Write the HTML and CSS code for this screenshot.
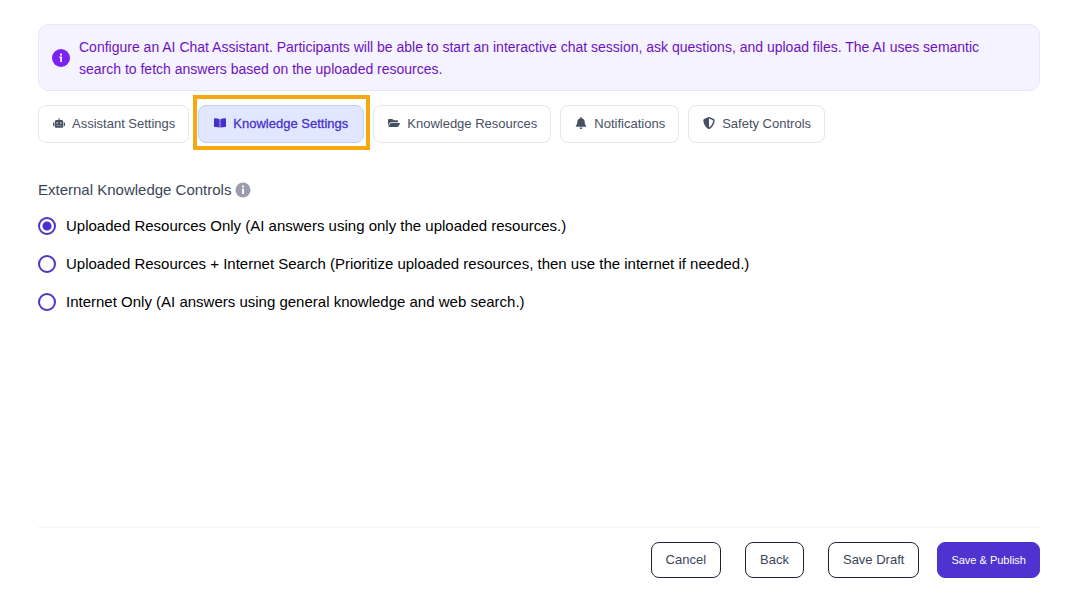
FILE: index.html
```html
<!DOCTYPE html>
<html lang="en">
<head>
<meta charset="utf-8">
<meta name="viewport" content="width=device-width, initial-scale=1">
<title>AI Chat Assistant</title>
<link rel="stylesheet" href="styles.css">
</head>
<body>
<main class="page">
  <section class="notice">
    <svg class="notice-icon" viewBox="0 0 18 18" aria-hidden="true"><circle cx="9" cy="9" r="9" fill="#7c22f5"/><path fill="#f5f3ff" d="M8 4.6h2v1.8H8zM7.4 7.6H10v5.4H8.2V8.9h-.8z"/></svg>
    <p class="notice-text">Configure an AI Chat Assistant. Participants will be able to start an interactive chat session, ask questions, and upload files. The AI uses semantic search to fetch answers based on the uploaded resources.</p>
  </section>

  <nav class="tabs" aria-label="Assistant sections">
    <button class="tab" type="button">
      <svg class="tab-icon" viewBox="0 0 640 512" aria-hidden="true"><path d="M32,224H64V416H32A32,32,0,0,1,0,384V256A32,32,0,0,1,32,224Zm512-48V448a64,64,0,0,1-64,64H160a64,64,0,0,1-64-64V176a80,80,0,0,1,80-80H288V32a32,32,0,0,1,64,0V96H464A80,80,0,0,1,544,176ZM264,256a40,40,0,1,0-40,40A40,40,0,0,0,264,256Zm-8,128H192v32h64Zm96,0H288v32h64ZM456,256a40,40,0,1,0-40,40A40,40,0,0,0,456,256Zm-8,128H384v32h64ZM640,256V384a32,32,0,0,1-32,32H576V224h32A32,32,0,0,1,640,256Z"/></svg>
      Assistant Settings
    </button>
    <button class="tab tab-active" type="button" aria-current="page">
      <svg class="tab-icon" viewBox="0 0 576 512" aria-hidden="true"><path d="M542 32c-55 3-164 14-231 46-5 3-7 7-7 13v374c0 11 12 16 23 12 69-28 169-33 219-35 17-1 30-14 30-30V62c0-17-15-31-34-30zM265 78C198 46 89 35 34 32 15 31 0 45 0 62v350c0 16 13 29 30 30 50 2 150 7 219 35 10 4 23-1 23-12V91c0-6-2-10-7-13z"/></svg>
      Knowledge Settings
    </button>
    <button class="tab" type="button">
      <svg class="tab-icon" viewBox="0 0 576 512" aria-hidden="true"><path d="M572.694 292.093L500.27 416.248A63.997 63.997 0 0 1 444.989 448H45.025c-18.523 0-30.064-20.093-20.731-36.093l72.424-124.155A64 64 0 0 1 152 256h399.964c18.523 0 30.064 20.093 20.73 36.093zM152 224h328v-48c0-26.51-21.49-48-48-48H272l-64-64H48C21.49 64 0 85.49 0 112v278.046l69.077-118.418C86.214 242.25 117.989 224 152 224z"/></svg>
      Knowledge Resources
    </button>
    <button class="tab" type="button">
      <svg class="tab-icon" viewBox="0 0 448 512" aria-hidden="true"><path d="M224 512c35.32 0 63.97-28.65 63.97-64H160.03c0 35.35 28.65 64 63.97 64zm215.39-149.71c-19.32-20.76-55.47-51.99-55.47-154.29 0-77.7-54.48-139.9-127.94-155.16V32c0-17.67-14.32-32-31.98-32s-31.98 14.33-31.98 32v20.84C118.56 68.1 64.08 130.3 64.08 208c0 102.3-36.15 133.53-55.47 154.29-6 6.45-8.66 14.16-8.61 21.71.11 16.4 12.98 32 32.1 32h383.8c19.12 0 32-15.6 32.1-32 .05-7.55-2.61-15.27-8.61-21.71z"/></svg>
      Notifications
    </button>
    <button class="tab" type="button">
      <svg class="tab-icon" viewBox="0 0 512 512" aria-hidden="true"><path fill-rule="evenodd" d="M466 84L274 4a48 48 0 0 0-36 0L46 84a48 48 0 0 0-30 44c0 198 114 335 222 380a48 48 0 0 0 36 0c86-36 222-159 222-380a48 48 0 0 0-30-44zM256 446V66l175 73c-3 151-82 260-175 307z"/></svg>
      Safety Controls
    </button>
  </nav>

  <fieldset class="controls">
    <legend class="legend">External Knowledge Controls
      <svg class="legend-icon" viewBox="0 0 16 16" aria-hidden="true"><circle cx="8" cy="8" r="7.5" fill="#9b9daf"/><path fill="#fff" d="M7.1 3.6h1.9v1.9H7.1zM7.1 6.7H9V12H7.1z"/></svg>
    </legend>
    <label class="option"><input class="radio" type="radio" name="source" checked>Uploaded Resources Only (AI answers using only the uploaded resources.)</label>
    <label class="option"><input class="radio" type="radio" name="source">Uploaded Resources + Internet Search (Prioritize uploaded resources, then use the internet if needed.)</label>
    <label class="option"><input class="radio" type="radio" name="source">Internet Only (AI answers using general knowledge and web search.)</label>
  </fieldset>

  <footer class="actions">
    <button class="btn" type="button">Cancel</button>
    <button class="btn" type="button">Back</button>
    <button class="btn" type="button">Save Draft</button>
    <button class="btn btn-primary" type="submit">Save &amp; Publish</button>
  </footer>
</main>
</body>
</html>
```
FILE: styles.css
```css
* {
  box-sizing: border-box;
}

body {
  margin: 0;
  background: #fff;
  color: #000;
  font-family: "Liberation Sans", Arial, sans-serif;
  font-size: 15px;
}

button {
  font-family: inherit;
  cursor: pointer;
}

.page {
  display: flex;
  flex-direction: column;
  min-height: 100vh;
  padding: 24px 37px 24px 38px;
}

.notice {
  display: flex;
  align-items: center;
  gap: 9px;
  padding: 11px 24px 10px 13px;
  border: 1px solid #e9e5fb;
  border-radius: 11px;
  background: #f5f3ff;
}

.notice-icon {
  flex: none;
  width: 18px;
  height: 18px;
}

.notice-text {
  margin: 0;
  color: #6d12c0;
  font-size: 14px;
  line-height: 22px;
}

.tabs {
  display: flex;
  flex-wrap: wrap;
  gap: 9px;
  margin-top: 14px;
}

.tab {
  display: flex;
  align-items: center;
  gap: 7px;
  height: 38px;
  padding: 0 13px 2px 14px;
  border: 1px solid #e5e7eb;
  border-radius: 8px;
  background: #fff;
  color: #475063;
  font-size: 13px;
}

.tab-icon {
  width: 12px;
  height: 12px;
  fill: currentColor;
}

.tab-active {
  position: relative;
  padding: 0 15px 2px;
  border-color: #c3cdf8;
  background: #e0e7ff;
  color: #4630c8;
  -webkit-text-stroke: thin;
}

/* Square frame that calls out the current tab */
.tab-active::after {
  content: "";
  position: absolute;
  inset: -11px -7px -8px -6px;
  border: 4px solid #f5a80f;
  pointer-events: none;
}

.controls {
  display: flex;
  flex-direction: column;
  gap: 16px;
  margin: 37px 0 0;
  padding: 0;
  border: 0;
}

.legend {
  display: flex;
  align-items: center;
  gap: 4px;
  margin-bottom: 15px;
  padding: 0;
  color: #3b4558;
  line-height: 20px;
}

.legend-icon {
  width: 16px;
  height: 16px;
}

.option {
  display: flex;
  align-items: center;
  gap: 10px;
  line-height: 22px;
}

.radio {
  appearance: none;
  flex: none;
  width: 18px;
  height: 18px;
  margin: 0;
  border: 2px solid #4f35c9;
  border-radius: 50%;
  background: #fff;
}

.radio:checked {
  background: radial-gradient(circle, #4a30cc 4px, #fff 5px);
}

.actions {
  display: flex;
  flex-wrap: wrap;
  justify-content: flex-end;
  gap: 24px;
  margin-top: auto;
  padding-top: 14px;
  border-top: 1px solid #f3f4f6;
}

.btn {
  height: 36px;
  padding: 0 14px 2px;
  border: 1px solid #1f2433;
  border-radius: 8px;
  background: #fff;
  color: #3b4558;
  font-size: 13px;
}

.btn-primary {
  margin-left: -6px;
  padding: 0 13px;
  border-color: #4f33d0;
  background: #4f33d0;
  color: #fff;
  font-size: 11px;
}
```
